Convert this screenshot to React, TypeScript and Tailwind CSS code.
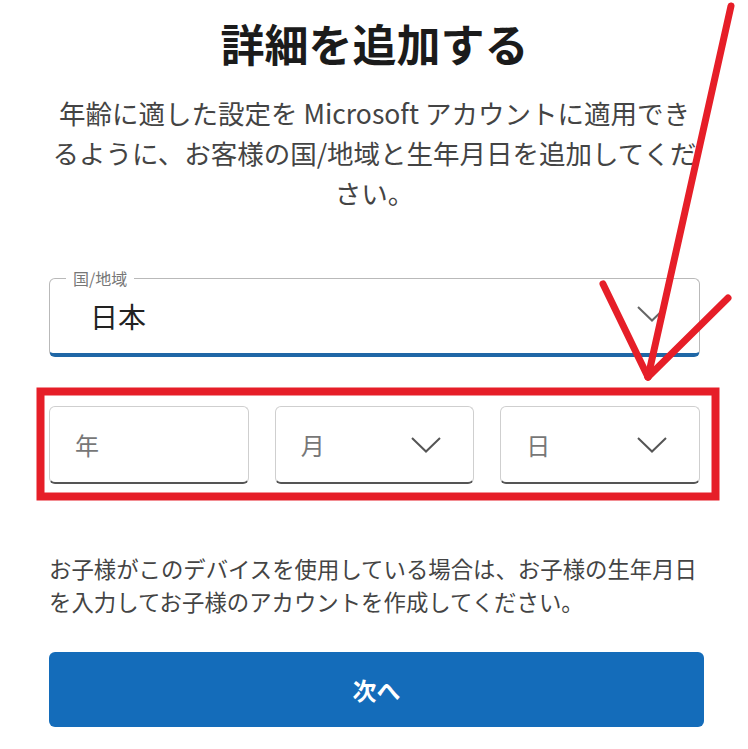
const FONT = { fontFamily: '"Noto Sans CJK JP", "Noto Sans", sans-serif' };

/* ── wide flat chevron used by the select boxes ── */
function Chevron({ className }: { className?: string }) {
  return (
    <svg className={className} width="30" height="16" viewBox="0 0 30 16" fill="none">
      <polyline points="1,1 15,14.5 29,1" stroke="currentColor" strokeWidth="2" />
    </svg>
  );
}

/* ── Date select box ── */
function DateBox({ label, select }: { label: string; select?: boolean }) {
  return (
    <div className="h-[78px] flex items-center justify-between pl-[25px] pr-[32px] border border-[#cfcfcf] border-b-2 border-b-[#555] rounded-[6px] bg-white">
      <span className="text-[24px] text-[#777]">{label}</span>
      {select && <Chevron className="text-[#555]" />}
    </div>
  );
}

export default function App() {
  return (
    <div className="relative w-[748px] h-[749px] overflow-hidden bg-white" style={FONT}>
      <div className="pl-[49px] pr-[48px] pt-[17px]">
        <h1 className="text-center text-[44px] leading-[52px] font-bold text-[#1b1b1b]">詳細を追加する</h1>
        <p className="mt-[24px] mx-[1px] text-center text-[26.5px] leading-[40px] text-[#444]">
          年齢に適した設定を Microsoft アカウントに適用できるように、お客様の国/地域と生年月日を追加してください。
        </p>

        {/* country / region */}
        <div className="relative mt-[65px] h-[79px] flex items-center justify-between pl-[40px] pr-[32px] border border-[#b9b9b9] border-b-4 border-b-[#1f67a6] rounded-[6px]">
          <span className="absolute -top-[12px] left-[16px] px-[7px] bg-white text-[16px] leading-[22px] text-[#777]">国/地域</span>
          <span className="text-[28px] text-[#222]">日本</span>
          <Chevron className="text-[#666] -mt-[4px]" />
        </div>

        {/* date of birth */}
        <div className="mt-[49px] grid grid-cols-3 gap-[26px]">
          <DateBox label="年" />
          <DateBox label="月" select />
          <DateBox label="日" select />
        </div>

        <p className="mt-[68px] text-[22.4px] leading-[33px] text-[#444]">
          お子様がこのデバイスを使用している場合は、お子様の生年月日を入力してお子様のアカウントを作成してください。
        </p>

        <button className="mt-[34px] w-[655px] h-[75px] rounded-[6px] bg-[#146cba] text-white text-[24px] font-bold">
          次へ
        </button>
      </div>

      {/* red annotation drawn over the page */}
      <svg className="absolute inset-0 pointer-events-none" width="748" height="749" viewBox="0 0 748 749">
        <g stroke="#e61e28" strokeWidth="7" strokeLinecap="round" fill="none">
          <line x1="731" y1="6" x2="648" y2="377" />
          <line x1="603" y1="284" x2="648" y2="377" />
          <line x1="728" y1="298" x2="648" y2="377" />
        </g>
        <rect x="40.5" y="391.5" width="675" height="105" stroke="#e61e28" strokeWidth="8" fill="none" />
      </svg>
    </div>
  );
}
